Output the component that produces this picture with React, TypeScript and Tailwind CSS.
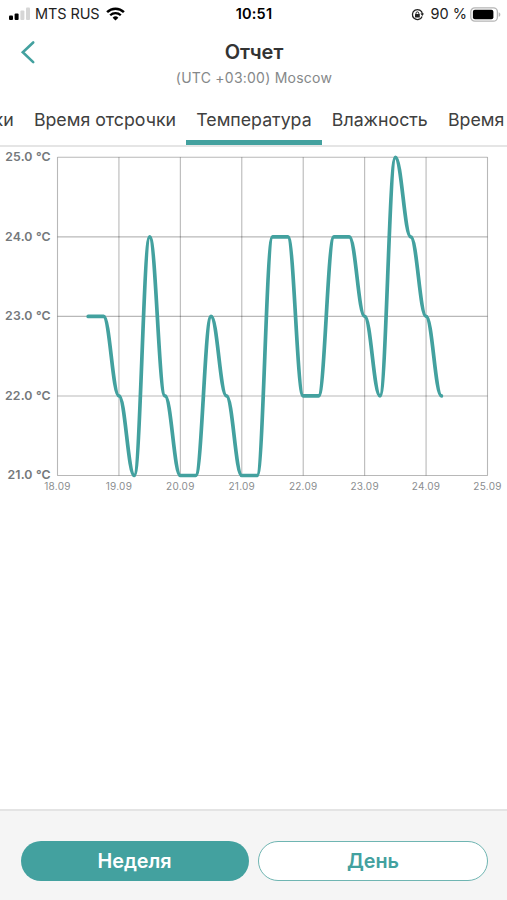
const TEAL = '#43a19f';

const LEFT = 57.5;
const RIGHT = 487.5;
const TOP = 157.3;
const STEP_Y = 79.55;
const DAY = (RIGHT - LEFT) / 7;
const EASE = 0.4;

const days = ['18.09', '19.09', '20.09', '21.09', '22.09', '23.09', '24.09', '25.09'];
const degrees = [25, 24, 23, 22, 21];

// One reading every six hours, starting at noon on 18.09.
const readings = [
  23, 23, 22, 21, 24, 22, 21, 21, 23, 22, 21, 21, 24, 24, 22, 22, 24, 24, 23, 22, 25, 24, 23, 22,
];

const yOf = (t: number) => TOP + (25 - t) * STEP_Y;
const xOf = (i: number) => LEFT + DAY * (0.5 + i / 4);

const linePath = readings
  .map((t, i) => {
    if (i === 0) return `M${xOf(0)} ${yOf(t)}`;
    const pull = (DAY / 4) * EASE;
    return `C${xOf(i - 1) + pull} ${yOf(readings[i - 1])} ${xOf(i) - pull} ${yOf(t)} ${xOf(i)} ${yOf(t)}`;
  })
  .join('');

function StatusBar() {
  return (
    <div className="grid h-7 grid-cols-[1fr_auto_1fr] items-center pr-[6px] pl-[9px] text-[14.5px] leading-7 text-[#222]">
      <div className="flex items-center">
        <svg width="22" height="14" viewBox="0 0 22 14" className="shrink-0">
          <rect x="0" y="8.6" width="4" height="4.4" rx="1" fill="#000" />
          <rect x="5.6" y="6.5" width="4" height="6.5" rx="1" fill="#000" />
          <rect x="11.4" y="3.6" width="4" height="9.4" rx="1" fill="#d6d6d6" />
          <rect x="17" y="0.6" width="4" height="12.4" rx="1" fill="#d6d6d6" />
        </svg>
        <span className="ml-1 whitespace-nowrap tracking-[-0.1px]">MTS RUS</span>
        <svg width="19" height="14" viewBox="0 0 19 14" className="ml-[6px] shrink-0" fill="none" stroke="#000">
          <path d="M1.1 5.1a12 12 0 0 1 16.8 0" strokeWidth="2.5" />
          <path d="M4.2 8.2a7.6 7.6 0 0 1 10.6 0" strokeWidth="2.3" />
          <path d="M9.5 13.6L6.6 10.7a4.2 4.2 0 0 1 5.8 0z" fill="#000" stroke="none" />
        </svg>
      </div>
      <span className="mr-[2px] font-semibold tracking-[0.2px] text-black">10:51</span>
      <div className="flex items-center justify-end">
        <svg width="13" height="13" viewBox="0 0 13 13" className="mr-[7px]" fill="none" stroke="#222">
          <path d="M11.1 8.4a5 5 0 1 1 .3-2.4" strokeWidth="1.3" />
          <path d="M9.4 5.4h3.6l-1.7 2.5z" fill="#222" stroke="none" />
          <rect x="4" y="6" width="4.8" height="3.4" rx=".5" fill="#222" stroke="none" />
          <path d="M5 6.4V5.3a1.4 1.4 0 0 1 2.8 0v1.1" strokeWidth="1" />
        </svg>
        <span className="whitespace-nowrap">90 %</span>
        <svg width="31" height="15" viewBox="0 0 31 15" className="ml-[3px] shrink-0">
          <rect x="0.8" y="0.8" width="26.6" height="13.4" rx="4" fill="#fff" stroke="#b5b5b5" strokeWidth="1.3" />
          <rect x="2.9" y="2.8" width="20.5" height="9.4" rx="2" fill="#000" />
          <path d="M28.7 5.2c2.2.8 2.2 3.8 0 4.6z" fill="#b5b5b5" />
        </svg>
      </div>
    </div>
  );
}

function Header() {
  return (
    <header className="grid h-[66px] grid-cols-[1fr_auto_1fr] items-start">
      <button className="ml-5 mt-3 w-4" aria-label="Назад">
        <svg width="16" height="24" viewBox="0 0 16 24" fill="none">
          <path d="M13.2 2.5L2.8 12.3l10.4 9.8" stroke={TEAL} strokeWidth="2.6" strokeLinecap="round" />
        </svg>
      </button>
      <div className="flex flex-col items-center">
        <h1 className="mt-3 pl-[1px] text-[20px] leading-6 font-semibold text-[#333]">Отчет</h1>
        <p className="mt-1 pl-[1px] text-[14px] leading-5 tracking-[0.24px] text-[#858889]">(UTC +03:00) Moscow</p>
      </div>
    </header>
  );
}

function Tab({ label, active = false }: { label: string; active?: boolean }) {
  return (
    <div
      className={
        active
          ? 'h-[51px] shrink-0 border-b-[5px] border-[#43a19f] px-[10.1px] pt-[13px]'
          : 'h-[51px] shrink-0 px-[10.1px] pt-[13px]'
      }
    >
      {label}
    </div>
  );
}

function Tabs() {
  return (
    <nav className="flex h-[53px] justify-start overflow-hidden border-b-2 border-[#e5e5e5] text-[17.75px] leading-[26px] whitespace-nowrap text-[#404040]">
      <div className="flex w-[23.8px] shrink-0 justify-end">
        <Tab label="Поливки" />
      </div>
      <Tab label="Время отсрочки" />
      <Tab label="Температура" active />
      <Tab label="Влажность" />
      <Tab label="Время" />
    </nav>
  );
}

function Chart() {
  return (
    <svg width="507" height="353" viewBox="0 147 507 353" className="block shrink-0">
      <g stroke="#000" strokeOpacity="0.28" strokeWidth="1.1">
        {degrees.map((t) => (
          <line key={t} x1={LEFT} x2={RIGHT} y1={yOf(t)} y2={yOf(t)} />
        ))}
        {days.map((d, i) => (
          <line key={d} x1={LEFT + DAY * i} x2={LEFT + DAY * i} y1={TOP} y2={yOf(21)} />
        ))}
      </g>
      <g fill="#74787b" fontSize="12.3" fontWeight="600" textAnchor="end" letterSpacing="0.15">
        {degrees.map((t) => (
          <text key={t} x="50.7" y={yOf(t) + 3.8}>
            {t}.0 °C
          </text>
        ))}
      </g>
      <g fill="#8a8d8f" fontSize="10" textAnchor="middle" letterSpacing="0.25">
        {days.map((d, i) => (
          <text key={d} x={LEFT + DAY * i} y="490.3">
            {d}
          </text>
        ))}
      </g>
      <path d={linePath} fill="none" stroke={TEAL} strokeWidth="3.7" strokeLinecap="round" strokeLinejoin="round" />
    </svg>
  );
}

export default function App() {
  return (
    <div className="flex h-[900px] w-[507px] flex-col overflow-hidden bg-white font-['Inter','Liberation_Sans',sans-serif]">
      <StatusBar />
      <Header />
      <Tabs />
      <Chart />
      <div className="flex-1" />
      <footer className="flex h-[91px] shrink-0 gap-[9.5px] border-t-2 border-[#e4e4e4] bg-[#f5f5f5] pr-[19px] pl-[20.5px] pt-[30px] text-[19.8px] font-semibold">
        <button className="h-10 flex-1 rounded-full bg-[#43a19f] pt-px text-white">Неделя</button>
        <button className="h-10 flex-1 rounded-full border-[1.5px] border-[#6fb5b2] bg-white pt-px text-[#43a19f]">День</button>
      </footer>
    </div>
  );
}
